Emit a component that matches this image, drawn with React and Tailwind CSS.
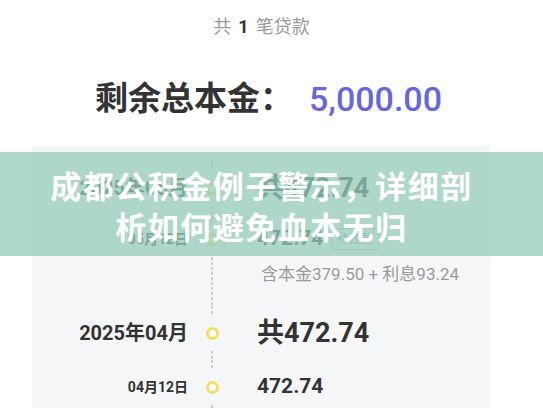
import React from "react";

const Line = ({ className = "" }) => (
  <div
    className={`w-[2px] bg-[repeating-linear-gradient(to_bottom,#cdcdcd_0_3px,transparent_3px_5px)] ${className}`}
  />
);

const Dot = () => (
  <div className="w-[13px] h-[13px] rounded-full border-[3px] border-[#f3df63] bg-white" />
);

const Row = ({ h, date, dateClass, children }) => (
  <div className="grid grid-cols-[156px_48px_1fr]" style={{ height: h }}>
    <div className={`flex items-center justify-end text-[#333] font-bold ${dateClass}`}>{date}</div>
    <div className="flex flex-col items-center">
      <Line className="flex-1" />
      <div className="my-[11px]">
        <Dot />
      </div>
      <Line className="flex-1" />
    </div>
    <div className="flex items-center pl-[21px] text-[#333] font-bold">{children}</div>
  </div>
);

export default function App() {
  return (
    <div className="relative w-[543px] h-[408px] overflow-hidden bg-white font-['Roboto','Noto_Sans_CJK_SC',sans-serif]">
      {/* header */}
      <div className="h-[52px] flex items-center justify-center pr-[20px] text-[18px] text-[#9a9a9a]">
        共<span className="mx-[7px] font-bold text-[#333]">1</span>笔贷款
      </div>
      <div className="h-[94px] flex items-center justify-center pr-[6px] text-[33px] font-bold">
        <span className="text-[#333]">剩余总本金：</span>
        <span className="ml-[16px] text-[34px] font-medium text-[#6767d9]">5,000.00</span>
      </div>

      {/* schedule card */}
      <div className="mx-[32px] w-[458px] h-[280px] bg-[#f5f6f8] pt-[14px]">
        <Row h={56} date="2025年05月" dateClass="text-[20px]">
          <span className="text-[27px]">共472.74</span>
        </Row>
        <Row h={46} date="05月12日" dateClass="text-[14px]">
          <span className="text-[21px]">472.74</span>
          <span className="ml-[8px] px-[5px] py-[1px] border border-[#bbb] rounded-[3px] text-[12px] font-normal text-[#999]">
            待还款
          </span>
        </Row>
        <div className="grid grid-cols-[156px_48px_1fr] h-[20px]">
          <div />
          <div className="flex justify-center">
            <Line className="h-full" />
          </div>
          <div className="flex items-center pl-[25px] text-[17px] text-[#9a9a9a]">
            含本金379.50 + 利息93.24
          </div>
        </div>
        <div className="grid grid-cols-[156px_48px_1fr] h-[24px]">
          <div />
          <div className="flex justify-center">
            <Line className="h-full" />
          </div>
          <div />
        </div>
        <Row h={54} date="2025年04月" dateClass="text-[20px]">
          <span className="text-[27px]">共472.74</span>
        </Row>
        <Row h={54} date="04月12日" dateClass="text-[14px]">
          <span className="text-[21px]">472.74</span>
        </Row>
      </div>

      {/* title banner overlay */}
      <div className="absolute left-0 right-0 top-[152px] h-[104px] bg-[#94ccb8]/75 flex flex-col items-center justify-center pt-[2px] pr-[20px] text-white font-bold text-[31px] leading-[41px] tracking-[1.5px] font-['Noto_Sans_CJK_SC',sans-serif]">
        <div>成都公积金例子警示，详细剖</div>
        <div>析如何避免血本无归</div>
      </div>
    </div>
  );
}
